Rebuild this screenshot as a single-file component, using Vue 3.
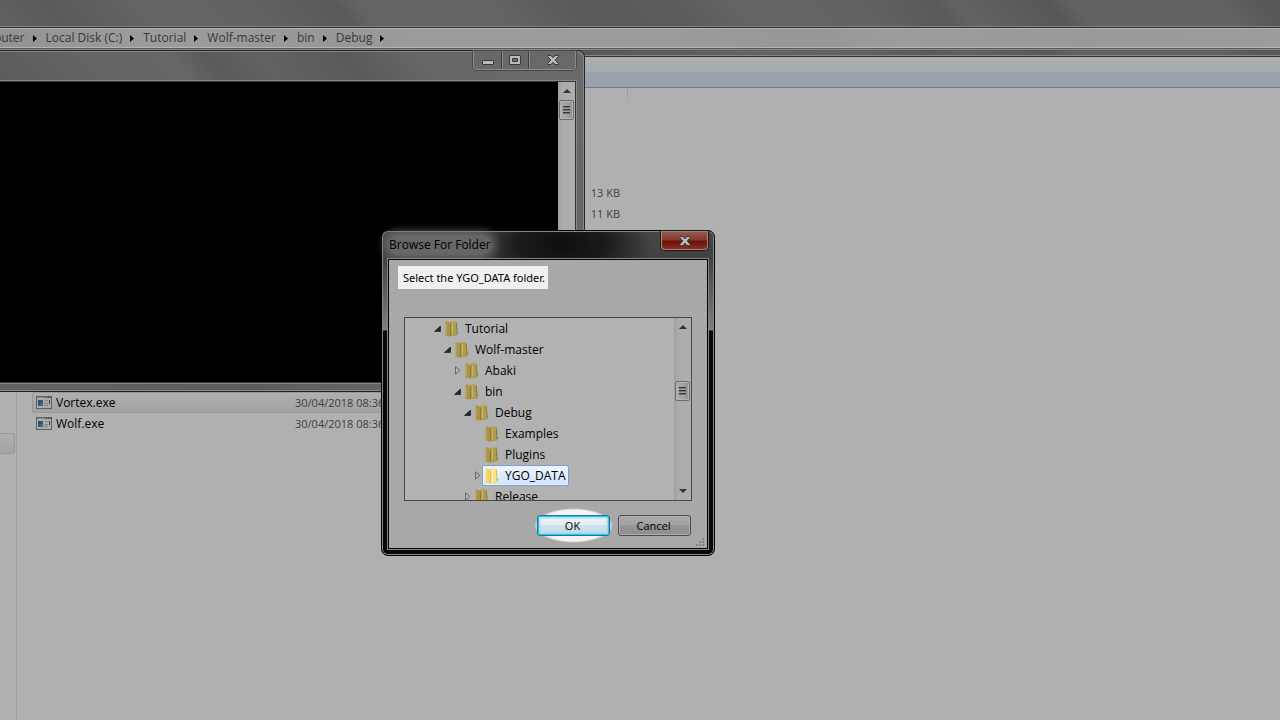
<script setup>
const crumbs = ['Computer', 'Local Disk (C:)', 'Tutorial', 'Wolf-master', 'bin', 'Debug']

const sizes = ['13 KB', '11 KB']
const files = [
  { name: 'Vortex.exe', date: '30/04/2018 08:36', hot: true },
  { name: 'Wolf.exe', date: '30/04/2018 08:36', hot: false },
]

const tree = [
  { name: 'Tutorial', level: 0, state: 'open' },
  { name: 'Wolf-master', level: 1, state: 'open' },
  { name: 'Abaki', level: 2, state: 'closed' },
  { name: 'bin', level: 2, state: 'open' },
  { name: 'Debug', level: 3, state: 'open' },
  { name: 'Examples', level: 4, state: 'leaf' },
  { name: 'Plugins', level: 4, state: 'leaf' },
  { name: 'YGO_DATA', level: 4, state: 'closed', selected: true },
  { name: 'Release', level: 3, state: 'closed' },
]
</script>

<template>
  <div class="desktop">
    <main class="explorer">
      <div class="glass title-strip"></div>
      <nav class="address" aria-label="Address">
        <template v-for="crumb in crumbs" :key="crumb">
          <a href="#">{{ crumb }}</a>
          <svg class="crumb-arrow" width="4" height="7" viewBox="0 0 4 7" aria-hidden="true">
            <path d="M0 0L4 3.5L0 7Z" fill="#000" />
          </svg>
        </template>
      </nav>
      <div class="glass gap-strip"></div>
      <div class="toolbar"></div>
      <div class="body">
        <aside class="sidebar"><div class="side-item"></div></aside>
        <table class="files">
          <colgroup>
            <col class="c-name" />
            <col class="c-date" />
            <col class="c-type" />
            <col class="c-size" />
          </colgroup>
          <tbody>
            <tr class="head"><td colspan="4"><span class="head-line"></span></td></tr>
            <tr class="space-a"><td colspan="4"></td></tr>
            <tr v-for="size in sizes" :key="size">
              <td></td><td></td><td></td><td class="size">{{ size }}</td>
            </tr>
            <tr class="space-b"><td colspan="4"></td></tr>
            <tr v-for="file in files" :key="file.name" :class="{ hot: file.hot }">
              <td>
                <span class="file-name">
                  <svg width="16" height="13" viewBox="0 0 16 13" aria-hidden="true">
                    <rect x=".5" y=".5" width="15" height="12" fill="#a9abad" stroke="#5d6063" />
                    <path d="M1 1.5H15" stroke="#85888c" />
                    <path d="M10 1.5h1M12 1.5h1M14 1.5h1" stroke="#33373c" />
                    <rect x="2" y="4" width="5" height="6" fill="#2d5f6c" />
                    <rect x="2" y="4" width="3" height="3" fill="#2c4f78" />
                    <rect x="4" y="7" width="3" height="3" fill="#3c7462" />
                    <path d="M9 4.500h3M8 7.500h4M8 9.500h4" stroke="#85888b" />
                    <path d="M13.5 4v4" stroke="#3e4348" />
                  </svg>
                  {{ file.name }}
                </span>
              </td>
              <td class="date">{{ file.date }}</td>
              <td></td>
              <td></td>
            </tr>
          </tbody>
        </table>
      </div>
    </main>

    <section class="console" aria-label="Console">
      <header class="console-title">
        <div class="controls">
          <button type="button" class="c-min" aria-label="Minimize">
            <svg width="12" height="5" viewBox="0 0 12 5"><rect x=".5" y=".5" width="11" height="4" rx=".5" fill="#b9b9b9" stroke="#3b3b45" /></svg>
          </button>
          <button type="button" class="c-max" aria-label="Maximize">
            <svg width="12" height="10" viewBox="0 0 12 10"><path d="M.5 .5h11v9H.5zM3.500 3.500v3h5v-3z" fill="#b9b9b9" fill-rule="evenodd" stroke="#3b3b45" /></svg>
          </button>
          <button type="button" class="c-close" aria-label="Close">
            <svg width="12" height="10" viewBox="0 0 12 10"><path d="M.7 .5h3.300L6 2.800 8 .5h3.300v1L8.200 5l3.100 3.500v1H8L6 7.200 4 9.500H.7v-1L3.800 5 .7 1.500z" fill="#b9b9b9" stroke="#3b3b45" /></svg>
          </button>
        </div>
      </header>
      <div class="console-body">
        <div class="screen"></div>
        <div class="scroll">
          <svg class="tri" width="8" height="4" viewBox="0 0 8 4"><path d="M4 0L8 4H0Z" fill="#333" /></svg>
          <div class="thumb"><i></i><i></i><i></i></div>
        </div>
      </div>
    </section>

    <section class="dialog" role="dialog" aria-labelledby="dlg-title">
      <header class="dialog-title">
        <h1 id="dlg-title">Browse For Folder</h1>
        <button type="button" class="close" aria-label="Close">
          <svg width="12" height="10" viewBox="0 0 12 10"><path d="M.7 .5h3.300L6 2.800 8 .5h3.300v1L8.200 5l3.100 3.500v1H8L6 7.200 4 9.500H.7v-1L3.800 5 .7 1.500z" fill="#b9b9b9" stroke="#3b3b45" /></svg>
        </button>
      </header>
      <div class="client">
        <p class="prompt">Select the YGO_DATA folder.</p>
        <div class="tree-box">
          <ul class="tree" role="tree">
            <li
              v-for="node in tree"
              :key="node.name"
              role="treeitem"
              :aria-selected="!!node.selected"
              :style="{ paddingLeft: 28 + node.level * 10 + 'px' }"
            >
              <span class="twist">
                <svg v-if="node.state === 'open'" width="8" height="6" viewBox="0 0 8 6"><path d="M6.500 0V5.500H.5Z" fill="#262626" stroke="#111" stroke-width=".6" /></svg>
                <svg v-else-if="node.state === 'closed'" width="6" height="9" viewBox="0 0 6 9"><path d="M.5 .8V8.200L5 4.500Z" fill="none" stroke="#6a6a6a" /></svg>
              </span>
              <span class="node" :class="{ selected: node.selected }">
                <svg class="folder" width="14" height="16" viewBox="0 0 14 16" aria-hidden="true">
                  <path d="M5 1.200Q5 .5 6 .5H11Q12 .5 12 1.500V6L12.900 7V13.500L12 15H5Z" class="f-back" />
                  <path d="M0 1.500Q0 .5 1 .5H2.500L6 2V15.200Q6 16 5 15.700L.8 14.500Q0 14.200 0 13.500Z" class="f-front" />
                  <path d="M.8 1.500V13.500" class="f-lite" />
                  <path d="M7.500 2V13" class="f-lite" />
                  <path d="M5.500 3V15" class="f-dark" />
                  <path d="M11.500 2V9" class="f-dark" />
                  <path d="M12 10V13" class="f-blue" />
                </svg>
                <span class="label">{{ node.name }}</span>
              </span>
            </li>
          </ul>
          <div class="scroll tree-scroll">
            <svg class="tri" width="8" height="4" viewBox="0 0 8 4"><path d="M4 0L8 4H0Z" fill="#333" /></svg>
            <div class="thumb"><i></i><i></i><i></i></div>
            <svg class="tri down" width="8" height="4" viewBox="0 0 8 4"><path d="M4 4L8 0H0Z" fill="#333" /></svg>
          </div>
        </div>
        <div class="actions">
          <div class="spot"><button type="button" class="btn ok">OK</button></div>
          <button type="button" class="btn">Cancel</button>
        </div>
        <svg class="grip" width="8" height="8" viewBox="0 0 8 8" aria-hidden="true">
          <path d="M6 0h2v2H6zM3 3h2v2H3zM6 3h2v2H6zM0 6h2v2H0zM3 6h2v2H3zM6 6h2v2H6z" fill="#858585" />
        </svg>
      </div>
    </section>
  </div>
</template>

<style>
html,
body {
  background: #b0b0b0;
}
body {
  overflow: hidden;
}
</style>

<style scoped>
* {
  box-sizing: border-box;
}
.desktop {
  position: relative;
  min-height: 100vh;
  overflow: hidden;
  font: 12px/20px "Open Sans", "Noto Sans", sans-serif;
  color: #000;
}
button {
  font: inherit;
  padding: 0;
  margin: 0;
}
svg {
  display: block;
  flex: none;
}

/* explorer window */
.explorer {
  min-height: 100vh;
  display: flex;
  flex-direction: column;
}
.glass {
  background: linear-gradient(50deg, #616161 0%, #5a5a5a 5%, #646464 12%, #636363 20%, #595959 27%, #646464 29%, #646464 39%, #595959 46%, #5c5c5c 53%, #646464 58%, #636363 67%, #595959 73%, #636363 75%, #575757 82%, #636363 84%, #636363 95%, #585858 98%);
}
.title-strip {
  height: 28px;
  border-bottom: 1px solid #2d2d2d;
  box-shadow: inset 0 -1px #848484;
}
.address {
  height: 20px;
  display: flex;
  align-items: center;
  border-top: 1px solid #b4b6b4;
  border-bottom: 1px solid #b4b6b4;
  background: linear-gradient(60deg, #929292, #9c9c9c 12%, #979797 27%, #9b9b9b 33%, #9b9b9b 52%, #979797 64%, #9c9c9c 70%, #999999 84%, #9c9c9c);
  white-space: nowrap;
}
.address a {
  color: #34393e;
  text-decoration: none;
  margin-right: 8px;
}
.address a:first-child {
  margin-left: -32px;
}
.crumb-arrow {
  margin-right: 9px;
}
.gap-strip {
  height: 9px;
  border-top: 1px solid #5b5b5b;
  border-bottom: 1px solid #333;
  box-shadow: inset 0 1px #868686, inset 0 -1px #868686;
}
.toolbar {
  height: 31px;
  background: linear-gradient(#b1adb0, #a3acb0 15px, #9aa1ac 15px, #9aa2ae);
  border-bottom: 1px solid #737c90;
}
.body {
  flex: 1;
  display: flex;
  background: #b0b0b0;
}
.sidebar {
  flex: none;
  width: 17px;
  border-right: 1px solid #93a0ae;
  padding-top: 345px;
}
.side-item {
  width: 15px;
  height: 21px;
  border: 1px solid #989898;
  border-left: 0;
  border-radius: 0 3px 3px 0;
  background: linear-gradient(#b0b0b0, #a3a3a3);
}
.files {
  margin-left: 15px;
  width: 596px;
  align-self: flex-start;
  table-layout: fixed;
  border-collapse: separate;
  border-spacing: 0;
}
.c-name {
  width: 256px;
}
.c-date {
  width: 130px;
}
.c-type {
  width: 120px;
}
.c-size {
  width: 90px;
}
.files td {
  height: 21px;
  padding: 0;
  line-height: 20px;
  white-space: nowrap;
}
.files .head td {
  height: 24px;
  vertical-align: top;
}
.head-line {
  display: block;
  width: 1px;
  height: 17px;
  margin-left: auto;
  background: linear-gradient(#9298a8, #acacb0);
}
.files .space-a td {
  height: 70px;
}
.files .space-b td {
  height: 168px;
}
.files .size {
  text-align: right;
  font-size: 11px;
  color: #404040;
  padding-right: 8px;
}
.file-name {
  display: flex;
  align-items: center;
  gap: 4px;
  padding-left: 4px;
}
.files .date {
  padding-left: 7px;
  font-size: 11px;
  color: #404040;
}
.hot td {
  border-top: 1px solid #989898;
  border-bottom: 1px solid #989898;
  background: linear-gradient(#afafaf, #a2a2a2);
}
.files .hot td {
  line-height: 19px;
}
.hot td:first-child {
  border-left: 1px solid #989898;
  border-radius: 3px 0 0 3px;
}
.hot .file-name {
  padding-left: 3px;
}

/* shared scroll bar */
.scroll {
  flex: none;
  width: 17px;
  display: flex;
  flex-direction: column;
  align-items: center;
  background: linear-gradient(90deg, #a0a0a0, #acacac 5px, #aeaeae);
}
.tri {
  margin-top: 7px;
}
.thumb {
  width: 15px;
  height: 20px;
  margin-top: 7px;
  border: 1px solid #6c6c6c;
  border-radius: 2px;
  box-shadow: inset 0 0 0 1px #b4b4b4;
  background: linear-gradient(90deg, #acacac, #a2a2a2 50%, #909090);
  display: flex;
  flex-direction: column;
  align-items: center;
  justify-content: center;
  gap: 1px;
}
.thumb i {
  width: 7px;
  height: 2px;
  border-top: 1px solid #333;
  background: #777;
}

/* console window */
.console {
  position: absolute;
  left: 0;
  top: 50px;
  width: 585px;
  height: 342px;
  display: flex;
  flex-direction: column;
  border: 1px solid #242424;
  border-left: 0;
  border-radius: 0 7px 0 0;
  box-shadow: inset -1px 1px #888, inset 0 -1px #888;
  padding: 0 8px 8px 0;
  background: linear-gradient(50deg, #626262 0%, #5c5c5c 30%, #646464 42%, #666 52%, #5a5a5a 56%, #626262 62%, #5a5a5a 72%, #666 80%, #6a6a6a 100%);
}
.console-title {
  height: 30px;
  display: flex;
  justify-content: flex-end;
}
.controls {
  display: flex;
  height: 19px;
  border: 1px solid #8a8a8a;
  border-top: 0;
  border-radius: 0 0 4px 4px;
  box-shadow: 0 0 0 1px #4a4a4a;
}
.controls button {
  border: 0;
  background: #686868;
  display: flex;
  align-items: center;
  justify-content: center;
}
.controls .c-min {
  width: 28px;
  padding-top: 4px;
  border-right: 1px solid #404040;
  border-radius: 0 0 0 3px;
}
.controls .c-max {
  width: 27px;
  padding-right: 1px;
  border-left: 1px solid #888;
  border-right: 1px solid #404040;
}
.controls .c-close {
  width: 46px;
  border-left: 1px solid #888;
  border-radius: 0 0 3px 0;
}
.console-body {
  flex: 1;
  display: flex;
  border: 1px solid #343434;
  border-left: 0;
  box-shadow: 0 0 0 1px #888;
}
.screen {
  flex: 1;
  background: #000;
}

/* browse dialog */
.dialog {
  position: absolute;
  left: 381px;
  top: 230px;
  width: 334px;
  display: flex;
  flex-direction: column;
  padding: 0 6px 6px;
  border: 1px solid #000;
  border-radius: 7px;
  box-shadow: inset 0 0 0 1px #858585;
  background:
    radial-gradient(ellipse 90px 50px at 180px 12px, rgba(0, 0, 0, 0.8), rgba(0, 0, 0, 0.6) 50%, rgba(0, 0, 0, 0)),
    linear-gradient(#474747, #414141 28px, #808080 99px, #080808 100px, #080808);
}
.dialog-title {
  height: 28px;
  display: flex;
  align-items: flex-start;
  justify-content: space-between;
}
.dialog-title h1 {
  margin: 4px 0 0;
  padding: 0 1px;
  font-size: 12px;
  line-height: 20px;
  font-weight: 400;
  border-radius: 10px;
  background: rgba(115, 115, 115, 0.75);
  box-shadow: 0 0 8px 4px rgba(115, 115, 115, 0.75);
}
.close {
  width: 47px;
  height: 19px;
  border: 1px solid #a28a86;
  border-top-color: #888;
  border-radius: 0 0 4px 4px;
  box-shadow: 0 0 0 1px #2a1210;
  background: linear-gradient(#955a50, #86392c 8px, #6b1206 9px, #8a2f20);
  display: flex;
  align-items: center;
  justify-content: center;
}
.client {
  position: relative;
  border: 1px solid #000;
  box-shadow: 0 0 0 1px #858585;
  background: #a8a8a8;
  padding: 6px 15px 12px;
}
.prompt {
  width: max-content;
  height: 23px;
  margin: 0 0 28px -6px;
  padding: 0 3px 0 5px;
  line-height: 23px;
  font-family: "Noto Sans", "Open Sans", sans-serif;
  font-size: 11px;
  background: #f0f0f0;
}
.tree-box {
  height: 184px;
  display: flex;
  overflow: hidden;
  border: 1px solid #474747;
  background: #b2b2b2;
}
.tree {
  flex: 1;
  list-style: none;
  margin: 0;
  padding: 0;
}
.tree li {
  height: 21px;
  display: flex;
  align-items: center;
}
.twist {
  width: 9px;
  display: flex;
  justify-content: center;
}
.node {
  height: 21px;
  display: flex;
  align-items: center;
  gap: 5px;
  padding: 0 2px;
  border: 1px solid transparent;
  line-height: 19px;
}
.node.selected {
  border-color: #7da2ce;
  border-radius: 2px;
  background: linear-gradient(#f0f6fe, #cde3fd);
  box-shadow: inset 0 0 0 1px #e8f2ff;
}
.folder {
  margin: 0 1px 0 0;
}
.f-back {
  fill: #b19c4e;
}
.f-front {
  fill: #a8954a;
}
.f-lite {
  fill: none;
  stroke: #c1b57c;
}
.f-dark {
  fill: none;
  stroke: #8f7d37;
}
.f-blue {
  fill: none;
  stroke: #3c87a8;
}
.selected .f-back {
  fill: #fbe28a;
}
.selected .f-front {
  fill: #f0d468;
}
.selected .f-lite {
  stroke: #fff6c8;
}
.selected .f-dark {
  stroke: #dcbd58;
}
.selected .f-blue {
  stroke: #45b5e8;
}
.tree-scroll .thumb {
  margin-top: 52px;
}
.tree-scroll .down {
  margin-top: auto;
  margin-bottom: 7px;
}
.actions {
  display: flex;
  justify-content: flex-end;
  gap: 8px;
  margin: 14px 1px 0 0;
}
.spot {
  position: relative;
}
.spot::before {
  content: "";
  position: absolute;
  inset: -7px -3px;
  border-radius: 50%;
  background: radial-gradient(closest-side, #f4f4f4 88%, rgba(240, 240, 240, 0));
}
.btn {
  position: relative;
  display: block;
  width: 73px;
  height: 21px;
  padding-right: 2px;
  font-size: 11px;
  line-height: 19px;
  border: 1px solid #4c4c4c;
  border-radius: 3px;
  box-shadow: inset 0 0 0 1px #b0b0b0;
  background: linear-gradient(#a9a9a9, #a2a2a2 50%, #959595 50%, #8e8e8e);
}
.btn.ok {
  border-color: #2f6f94;
  box-shadow: inset 0 0 0 1px #1fc8f5, inset 0 0 2px 2px #8edcf2;
  background: linear-gradient(#f0f3f5, #e4edf2 50%, #cfe2ec 50%, #c0dae8);
}
.grip {
  position: absolute;
  right: 3px;
  bottom: 2px;
}
</style>
